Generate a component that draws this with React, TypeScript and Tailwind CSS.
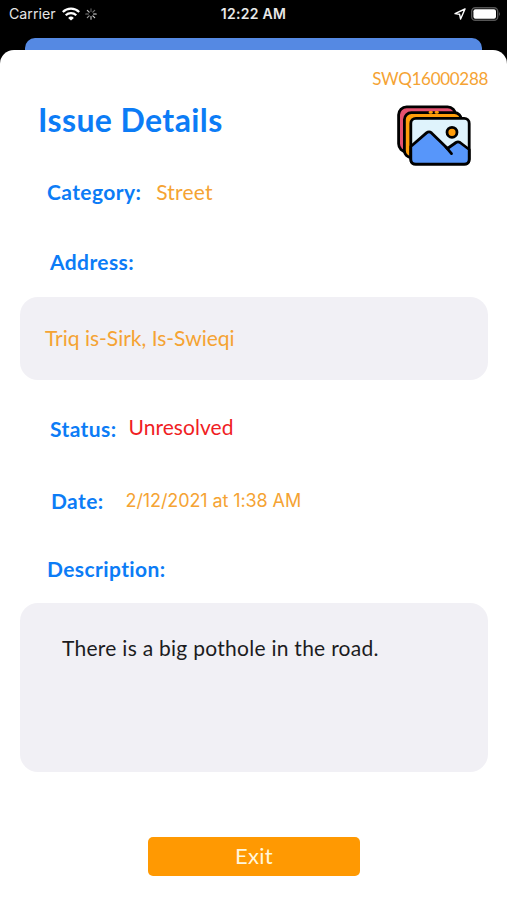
import type { ReactNode } from 'react'

const issue = {
  id: 'SWQ16000288',
  category: 'Street',
  address: 'Triq is-Sirk, Is-Swieqi',
  status: 'Unresolved',
  date: '2/12/2021 at 1:38 AM',
  description: 'There is a big pothole in the road.',
}

function WifiIcon() {
  return (
    <svg viewBox="0 0 18 14" className="h-[14px] w-[18px]" fill="white">
      <path d="M9 13.6 L6.1 10.9 A4.2 4.2 0 0 1 11.9 10.9 Z" />
      <path d="M3.7 8.3 A7.7 7.7 0 0 1 14.3 8.3" fill="none" stroke="white" strokeWidth="2.2" />
      <path d="M0.8 5 A11.8 11.8 0 0 1 17.2 5" fill="none" stroke="white" strokeWidth="2.2" />
    </svg>
  )
}

function Spinner() {
  const opacities = [0.35, 0.45, 0.9, 0.8, 0.7, 0.6, 0.5, 0.75]
  return (
    <svg viewBox="-6 -6 12 12" className="size-3" stroke="white" strokeWidth="1.2" strokeLinecap="round">
      {opacities.map((o, i) => (
        <line key={i} x1="0" y1="-2.6" x2="0" y2="-5.2" strokeOpacity={o} transform={`rotate(${i * 45})`} />
      ))}
    </svg>
  )
}

function StatusBar() {
  return (
    <div className="grid h-[38px] grid-cols-3 pb-[11px] font-['Inter','Liberation_Sans',sans-serif] text-[14px] text-white">
      <div className="flex items-center pl-[9px]">
        <span className="w-[53px] text-[14.2px] text-[#e5e5e5]">Carrier</span>
        <WifiIcon />
        <span className="ml-[5px]">
          <Spinner />
        </span>
      </div>
      <div className="flex items-center justify-center text-[14px] font-semibold tracking-[0.3px] text-[#e8e8e8]">
        12:22 AM
      </div>
      <div className="flex items-center justify-end pr-[6px]">
        <svg viewBox="0 0 12 12" className="mr-[5px] size-3" fill="none" stroke="white" strokeWidth="1.4" strokeLinejoin="round">
          <path d="M11 1 L1 5.6 L5.6 6.3 L6.6 11 Z" />
        </svg>
        <svg viewBox="0 0 30 14" className="h-[14px] w-[30px]">
          <rect x="0.7" y="0.7" width="26" height="12.6" rx="3.6" fill="none" stroke="#555" strokeWidth="1.4" />
          <rect x="2.4" y="2.2" width="22.6" height="9.6" rx="2" fill="white" />
          <path d="M28 4.8 Q29.8 7 28 9.2 Z" fill="#666" />
        </svg>
      </div>
    </div>
  )
}

function GalleryIcon() {
  return (
    <svg viewBox="0 0 74 61" className="h-[61px] w-[74px]" stroke="black" strokeWidth="2.8" strokeLinejoin="round" strokeLinecap="round">
      <rect x="1.6" y="1.8" width="57" height="45" rx="8" fill="#e5516f" />
      <rect x="7.4" y="7.6" width="57" height="45" rx="7" fill="#ff9d0a" />
      <path d="M33 7.3 H34.5 M39 7.3 H40.5" stroke="#ff9d0a" />
      <rect x="13.8" y="13.4" width="58.4" height="45.8" rx="5" fill="#dff3fc" />
      <path
        d="M13.8 41.5 L29.5 27.9 Q32 25.8 34.5 27.9 L50.5 43.5 L59 37.5 Q61 36.2 63 37.5 L72.2 44.5 V54.2 Q72.2 59.2 67.2 59.2 H18.8 Q13.8 59.2 13.8 54.2 Z"
        fill="#5796fa"
      />
      <path d="M49 42.2 L54.5 48.6" fill="none" />
      <circle cx="55" cy="27.3" r="5" fill="#ff9d0a" />
    </svg>
  )
}

function Label({ children }: { children: ReactNode }) {
  return <span className="text-[21px] font-bold tracking-[0.4px] text-[#0c7cf6]">{children}</span>
}

export default function App() {
  return (
    <div className="flex h-[900px] w-full flex-col overflow-hidden bg-black font-['Lato','Open_Sans',sans-serif] whitespace-nowrap [font-variant-ligatures:none]">
      <StatusBar />
      <div className="mx-[25px] h-3 shrink-0 rounded-t-[10px] bg-[#5589e3]" />
      <main className="flex flex-1 flex-col rounded-t-[14px] bg-white pt-[17px] pr-[19px] pl-5">
        <div className="flex h-6 items-center justify-end text-[17px] tracking-[-0.3px] text-[#f5a333]">{issue.id}</div>

        <header className="flex h-[76px] justify-between pt-[14px] pr-[17px] pl-[18px]">
          <h1 className="text-[32px] leading-[30px] font-bold tracking-[0.4px] text-[#0c7cf6]">Issue Details</h1>
          <GalleryIcon />
        </header>

        <div className="mt-[3px] flex h-[44px] items-center pl-[27px]">
          <Label>Category:</Label>
          <span className="ml-[15px] text-[21px] tracking-[0.2px] text-[#f5a333]">{issue.category}</span>
        </div>
        <div className="mt-[26px] flex h-[44px] items-center pl-[30px]">
          <Label>Address:</Label>
        </div>

        <div className="mt-[13px] flex h-[83px] items-center rounded-[18px] bg-[#f1f0f5] pb-0.5 pl-[25px] text-[21px] text-[#f5a333]">
          {issue.address}
        </div>

        <div className="mt-[27px] flex h-[44px] items-center pl-[30px]">
          <Label>Status:</Label>
          <span className="ml-3 pb-1 text-[21px] tracking-[0.05px] text-[#f01d24]">{issue.status}</span>
        </div>
        <div className="mt-7 flex h-[44px] items-center pl-[31px]">
          <Label>Date:</Label>
          <span className="ml-[22px] pb-0.5 font-['Inter','Liberation_Sans',sans-serif] text-[18px] tracking-[-0.1px] text-[#f5a333]">
            {issue.date}
          </span>
        </div>
        <div className="mt-6 flex h-[44px] items-center pl-[27px]">
          <Label>Description:</Label>
        </div>

        <div className="mt-3 h-[169px] rounded-[18px] bg-[#f1f0f5] pt-[29px] pl-[42px] text-[21px] tracking-[0.27px] text-[#1c1c1e]">
          {issue.description}
        </div>

        <button
          type="button"
          className="mt-[65px] ml-32 h-[39px] w-[212px] rounded-[5px] bg-[#ff9902] pb-0.5 text-[22px] tracking-[0.3px] text-[#fff6dd]"
        >
          Exit
        </button>
      </main>
    </div>
  )
}
